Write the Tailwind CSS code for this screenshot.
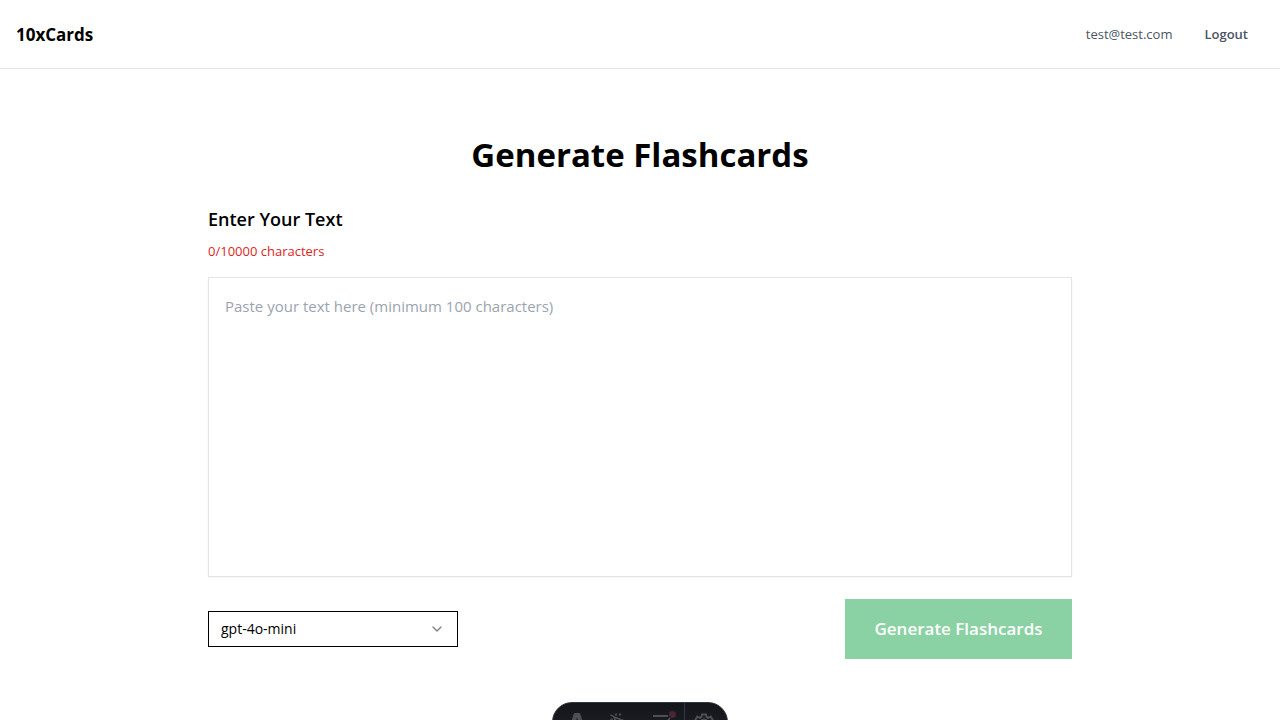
<!DOCTYPE html>
<html lang="en">
<head>
<meta charset="utf-8">
<meta name="viewport" content="width=device-width, initial-scale=1">
<title>10xCards</title>
<script src="https://cdn.jsdelivr.net/npm/@tailwindcss/browser@4"></script>
</head>
<body class="min-h-screen overflow-hidden bg-white font-['Segoe_UI','Open_Sans',sans-serif] text-black">
<header class="border-b border-[#e5e5e5]">
  <nav class="flex h-[68px] items-center justify-between pt-0.5 pr-8 pl-4">
    <a href="#" class="text-[17px] font-bold">10xCards</a>
    <div class="flex items-center gap-8 text-[13px] text-[#4b5563]">
      <span>test@test.com</span>
      <button type="button" class="font-semibold">Logout</button>
    </div>
  </nav>
</header>
<main class="mx-auto max-w-4xl px-4 pt-16">
  <h1 class="mb-[30px] text-center text-[33px] leading-[44px] font-bold">Generate Flashcards</h1>
  <form>
    <label for="source" class="block text-lg leading-6 font-semibold">Enter Your Text</label>
    <p class="mt-2.5 mb-4 text-[13px] leading-5 text-[#dc2626]">0/10000 characters</p>
    <textarea id="source" class="block h-[300px] w-full resize-none border border-[#e5e5e5] p-4 text-[15px] leading-6 shadow-xs outline-none placeholder:text-[#9ca3af]" placeholder="Paste your text here (minimum 100 characters)"></textarea>
    <div class="mt-[22px] flex items-center justify-between">
      <div class="relative w-[250px]">
        <select aria-label="Model" class="h-9 w-full appearance-none border border-black bg-white px-3 text-sm outline-none">
          <option>gpt-4o-mini</option>
        </select>
        <svg class="pointer-events-none absolute top-2.5 right-[13px] size-4 text-[#808080]" viewBox="0 0 24 24" fill="none" stroke="currentColor" stroke-width="2" stroke-linecap="round" stroke-linejoin="round"><path d="m6 9 6 6 6-6"/></svg>
      </div>
      <button type="button" disabled class="h-[60px] w-[227px] bg-[#8ad1a3] text-[17px] font-semibold text-white">Generate Flashcards</button>
    </div>
  </form>
</main>
<div class="fixed -bottom-[22px] left-1/2 flex h-10 w-44 -translate-x-1/2 overflow-hidden rounded-full border border-[#343841] bg-linear-to-b from-[#13151a] to-[#20232b] text-[#4d4f54]">
  <button type="button" aria-label="Menu" class="flex w-[44px] justify-center pt-2.5 pl-1">
    <svg class="h-5 w-4" viewBox="0 0 16 20" fill="currentColor"><path d="M4.600 1.200Q5 0 6.200 0h3.600q1.200 0 1.600 1.200L16 16q-2.400-.9-5-1.200L8 4.500l-3 10.300Q2.400 15.100 0 16Z"/></svg>
  </button>
  <button type="button" aria-label="Inspect" class="flex w-[44px] justify-center pt-2">
    <svg class="h-6 w-5" viewBox="0 0 20 24" fill="none" stroke="currentColor" stroke-width="1.700"><path d="m5 6 13 5-4 2 4 4-2 2-4-4-2 4ZM7.500 4.500 6.500 2.500m4 2 1-2M4 5 1.500 4m2 4-2 1"/></svg>
  </button>
  <button type="button" aria-label="Audit" class="relative flex w-[43px] justify-center pt-2">
    <svg class="h-6 w-5" viewBox="0 0 20 24" fill="none" stroke="currentColor" stroke-width="2"><path d="M0 5h15M0 12h5M0 19h15m-4-9 2 2 4-5"/></svg>
    <span class="absolute top-2 right-2 size-[7px] rounded-full bg-[#492634]"></span>
  </button>
  <button type="button" aria-label="Settings" class="flex w-[43px] justify-center border-l border-[#343841] pt-2.5 pr-1">
    <svg class="size-5" viewBox="0 0 20 20" fill="none" stroke="currentColor" stroke-width="2"><path d="M8 1.500h4l.6 2.500 1.600.9 2.500-1.400 2 3.400-1.900 1.800v2.600l1.900 1.800-2 3.400-2.500-.9-1.600.9L12 19H8l-.6-2.500-1.600-.9-2.500.9-2-3.400 1.900-1.800V8.700L1.300 6.900l2-3.400L5.800 4.900 7.400 4Z"/><circle cx="10" cy="10" r="3.500"/></svg>
  </button>
</div>
</body>
</html>
